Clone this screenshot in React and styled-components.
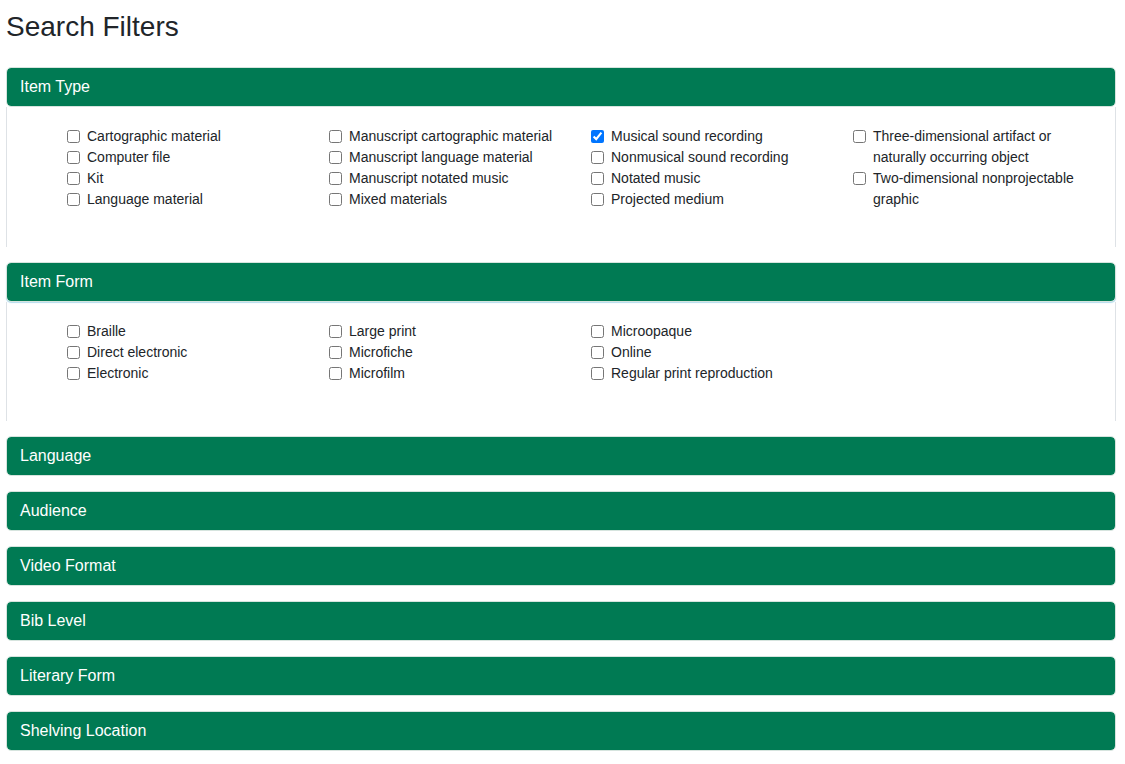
import React, {useState} from "react";
import styled, {createGlobalStyle} from "styled-components";

const GlobalStyle = createGlobalStyle`
  body {
    margin: 0;
    background: #fff;
    font-family: "Liberation Sans", Arial, sans-serif;
    color: #212529;
  }
`;

const filters = [
  {
    title: "Item Type",
    open: true,
    columns: [
      ["Cartographic material", "Computer file", "Kit", "Language material"],
      [
        "Manuscript cartographic material",
        "Manuscript language material",
        "Manuscript notated music",
        "Mixed materials",
      ],
      [
        "Musical sound recording",
        "Nonmusical sound recording",
        "Notated music",
        "Projected medium",
      ],
      [
        "Three-dimensional artifact or naturally occurring object",
        "Two-dimensional nonprojectable graphic",
      ],
    ],
  },
  {
    title: "Item Form",
    open: true,
    focused: true,
    columns: [
      ["Braille", "Direct electronic", "Electronic"],
      ["Large print", "Microfiche", "Microfilm"],
      ["Microopaque", "Online", "Regular print reproduction"],
    ],
  },
  {title: "Language"},
  {title: "Audience"},
  {title: "Video Format"},
  {title: "Bib Level"},
  {title: "Literary Form"},
  {title: "Shelving Location"},
];

function FilterSection({filter, checked, onToggle}) {
  return (
    <Section>
      <Header $focused={filter.focused}>{filter.title}</Header>
      {filter.open && (
        <Body>
          {filter.columns.map((col, i) => (
            <Column key={i}>
              {col.map((label) => (
                <Option key={label}>
                  <input
                    type="checkbox"
                    checked={!!checked[label]}
                    onChange={() => onToggle(label)}
                  />
                  <span>{label}</span>
                </Option>
              ))}
            </Column>
          ))}
        </Body>
      )}
    </Section>
  );
}

export default function App() {
  const [checked, setChecked] = useState({"Musical sound recording": true});

  const toggle = (label) =>
    setChecked((prev) => ({...prev, [label]: !prev[label]}));

  return (
    <Page>
      <GlobalStyle />
      <Title>Search Filters</Title>
      {filters.map((f) => (
        <FilterSection
          key={f.title}
          filter={f}
          checked={checked}
          onToggle={toggle}
        />
      ))}
    </Page>
  );
}

const Page = styled.div`
  padding: 0 9px 0 6px;
`;

const Title = styled.h1`
  margin: 10px 0 23px;
  font-size: 28px;
  font-weight: 400;
  line-height: 1.2;
  color: #212529;
`;

const Section = styled.section`
  margin-bottom: 15px;
`;

const Header = styled.div`
  height: 40px;
  box-sizing: border-box;
  padding: 0 13px;
  display: flex;
  align-items: center;
  background: #007a53;
  background-clip: padding-box;
  border: 1px solid #d6e4de;
  border-radius: 5px;
  color: #fff;
  font-size: 16px;
  box-shadow: ${(p) => (p.$focused ? "0 1px 1px #b4dcef" : "none")};
`;

const Body = styled.div`
  display: grid;
  grid-template-columns: repeat(4, 262px);
  padding: 19px 0 37px 60px;
  border-left: 1px solid #dee2e6;
  border-right: 1px solid #dee2e6;
`;

const Column = styled.div`
  display: flex;
  flex-direction: column;
  padding-right: 30px;
`;

const Option = styled.label`
  display: flex;
  align-items: flex-start;
  font-size: 14px;
  line-height: 21px;
  color: #212529;
  input {
    width: 13px;
    height: 13px;
    margin: 4px 7px 0 0;
    flex-shrink: 0;
  }
`;
